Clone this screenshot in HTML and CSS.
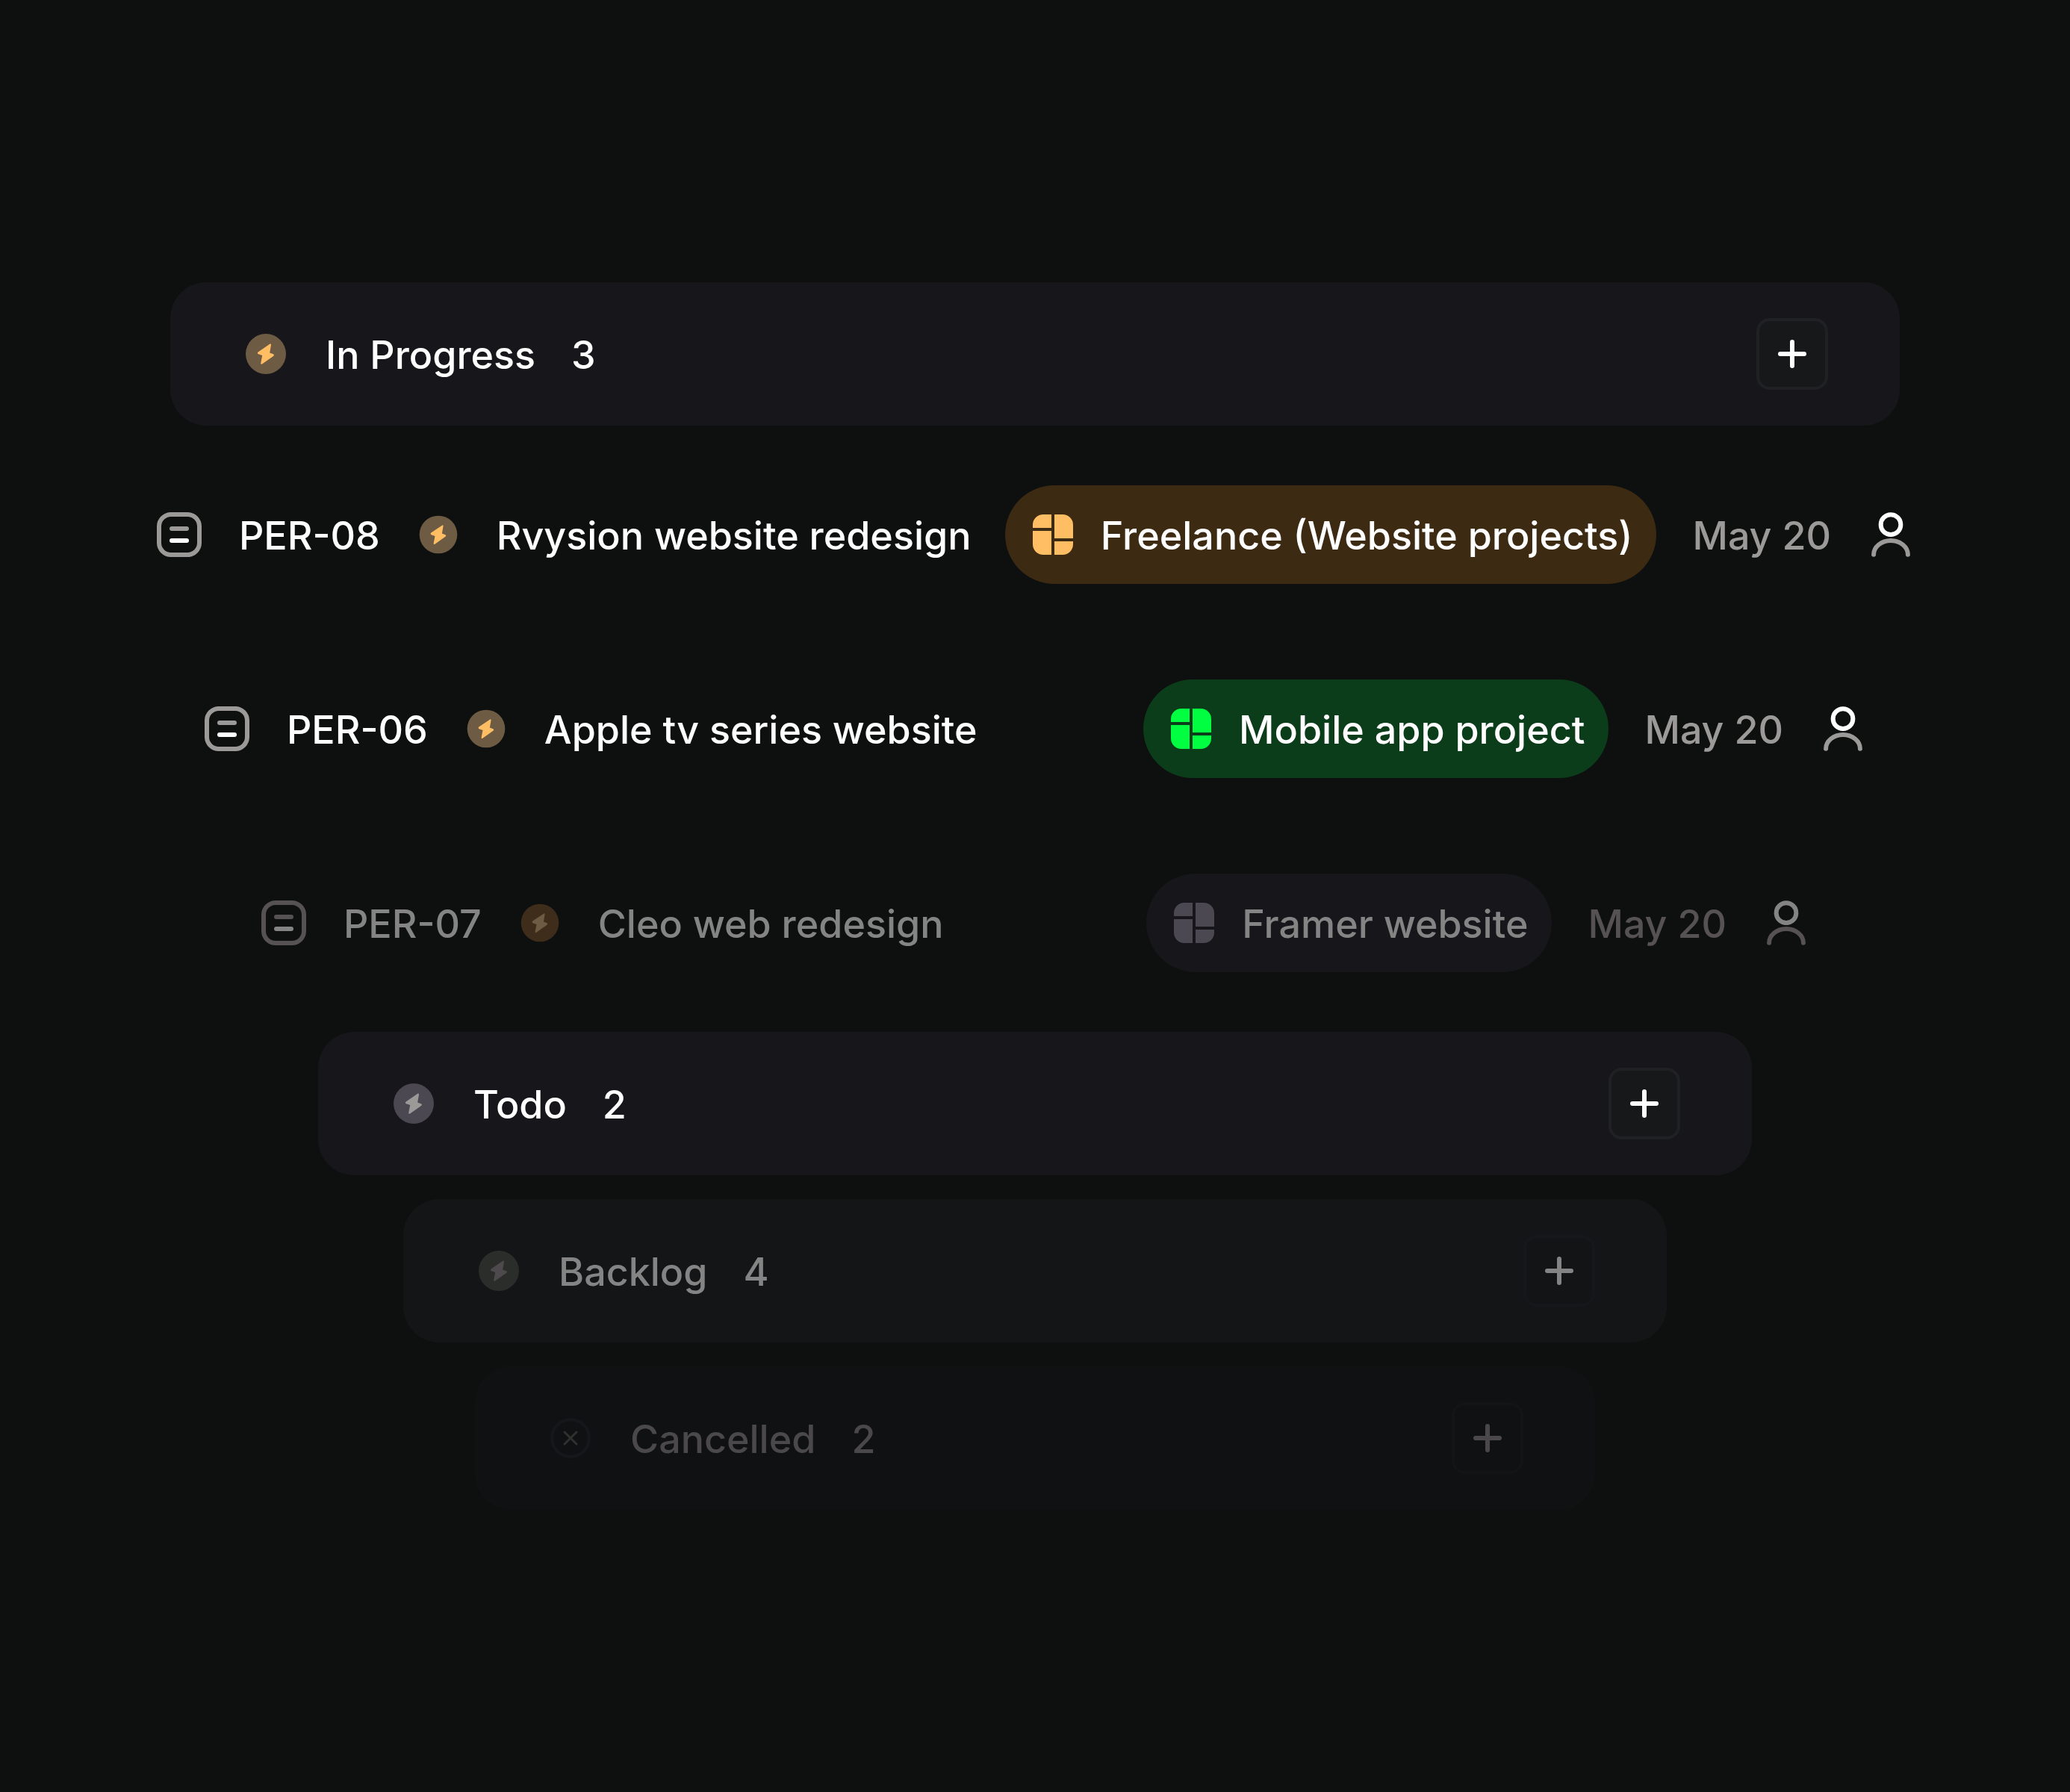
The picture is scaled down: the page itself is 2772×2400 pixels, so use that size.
FILE: index.html
```html
<!DOCTYPE html>
<html lang="en">
<head>
    <meta charset="UTF-8">
    <meta name="viewport" content="width=device-width, initial-scale=1.0">
    <title>Tasks</title>
    <link rel="stylesheet" href="styles.css">
</head>
<body>
    <!-- Icon sprite -->
    <svg class="sprite" aria-hidden="true">
        <symbol id="icon-bolt" viewBox="0 0 64 64">
            <circle cx="32" cy="32" r="27" fill="var(--disc)"/>
            <path fill="var(--bolt)" d="M37.6 18.6 21.6 29.4Q20 31.2 22 32.2L27.2 34 25.2 44.4Q25.2 46.4 27 45.6L42 35Q43.8 33.2 42 32.2L37.2 30.4 39 20Q39.2 17.8 37.6 18.6Z"/>
        </symbol>
        <symbol id="icon-cancel" viewBox="0 0 64 64">
            <circle cx="32" cy="32" r="25" fill="none" stroke="var(--disc)" stroke-width="4"/>
            <path d="M24 24 40 40M40 24 24 40" fill="none" stroke="var(--bolt)" stroke-width="3" stroke-linecap="round"/>
        </symbol>
        <symbol id="icon-task" viewBox="0 0 64 64">
            <rect x="5" y="5" width="54" height="54" rx="16" fill="none" stroke="var(--soft)" stroke-width="6"/>
            <path d="M22 24H42" stroke="var(--soft)" stroke-width="6" stroke-linecap="round"/>
            <path d="M22 40H42" stroke="var(--strong)" stroke-width="6" stroke-linecap="round"/>
        </symbol>
        <symbol id="icon-project" viewBox="0 0 64 64">
            <path fill="currentColor" d="M30 5V23H5V19A14 14 0 0 1 19 5ZM34 5H45A14 14 0 0 1 59 19V37H34ZM5 27H30V59H19A14 14 0 0 1 5 45ZM34 41H59V45A14 14 0 0 1 45 59H34Z"/>
        </symbol>
        <symbol id="icon-user" viewBox="0 0 24 24">
            <circle cx="12" cy="7" r="5" fill="none" stroke="var(--strong)" stroke-width="2.25"/>
            <path d="M20.59 22c0-3.87-3.85-7-8.59-7s-8.59 3.13-8.59 7" fill="none" stroke="var(--soft)" stroke-width="2.25" stroke-linecap="round"/>
        </symbol>
        <symbol id="icon-plus" viewBox="0 0 64 64">
            <path d="M16 32H48M32 16V48" fill="none" stroke="currentColor" stroke-width="6" stroke-linecap="round"/>
        </symbol>
    </svg>

    <main class="board">
        <section class="group">
            <header class="group-header header-progress">
                <svg class="icon bolt-orange" aria-hidden="true"><use href="#icon-bolt"/></svg>
                <h2>In Progress</h2>
                <span class="count">3</span>
                <button type="button" class="add" aria-label="Add task to In Progress"><svg class="icon"><use href="#icon-plus"/></svg></button>
            </header>

            <ul class="tasks">
                <li class="task task-first">
                    <svg class="icon" aria-hidden="true"><use href="#icon-task"/></svg>
                    <span class="task-id">PER-08</span>
                    <svg class="icon icon-small bolt-orange" aria-hidden="true"><use href="#icon-bolt"/></svg>
                    <span class="task-title">Rvysion website redesign</span>
                    <span class="project project-orange">
                        <svg class="icon" aria-hidden="true"><use href="#icon-project"/></svg>
                        <span class="project-name">Freelance (Website projects)</span>
                    </span>
                    <time class="date">May 20</time>
                    <svg class="icon" aria-hidden="true"><use href="#icon-user"/></svg>
                </li>
                <li class="task task-second">
                    <svg class="icon" aria-hidden="true"><use href="#icon-task"/></svg>
                    <span class="task-id">PER-06</span>
                    <svg class="icon icon-small bolt-orange" aria-hidden="true"><use href="#icon-bolt"/></svg>
                    <span class="task-title">Apple tv series website</span>
                    <span class="project project-green">
                        <svg class="icon" aria-hidden="true"><use href="#icon-project"/></svg>
                        <span class="project-name">Mobile app project</span>
                    </span>
                    <time class="date">May 20</time>
                    <svg class="icon" aria-hidden="true"><use href="#icon-user"/></svg>
                </li>
                <li class="task task-third">
                    <svg class="icon" aria-hidden="true"><use href="#icon-task"/></svg>
                    <span class="task-id">PER-07</span>
                    <svg class="icon icon-small bolt-brown" aria-hidden="true"><use href="#icon-bolt"/></svg>
                    <span class="task-title">Cleo web redesign</span>
                    <span class="project project-grey">
                        <svg class="icon" aria-hidden="true"><use href="#icon-project"/></svg>
                        <span class="project-name">Framer website</span>
                    </span>
                    <time class="date">May 20</time>
                    <svg class="icon" aria-hidden="true"><use href="#icon-user"/></svg>
                </li>
            </ul>
        </section>

        <section class="group">
            <header class="group-header header-todo">
                <svg class="icon bolt-grey" aria-hidden="true"><use href="#icon-bolt"/></svg>
                <h2>Todo</h2>
                <span class="count">2</span>
                <button type="button" class="add" aria-label="Add task to Todo"><svg class="icon"><use href="#icon-plus"/></svg></button>
            </header>
        </section>

        <section class="group">
            <header class="group-header header-backlog">
                <svg class="icon bolt-dim" aria-hidden="true"><use href="#icon-bolt"/></svg>
                <h2>Backlog</h2>
                <span class="count">4</span>
                <button type="button" class="add" aria-label="Add task to Backlog"><svg class="icon"><use href="#icon-plus"/></svg></button>
            </header>
        </section>

        <section class="group">
            <header class="group-header header-cancelled">
                <svg class="icon cancel-dim" aria-hidden="true"><use href="#icon-cancel"/></svg>
                <h2>Cancelled</h2>
                <span class="count">2</span>
                <button type="button" class="add" aria-label="Add task to Cancelled"><svg class="icon"><use href="#icon-plus"/></svg></button>
            </header>
        </section>
    </main>
</body>
</html>
```
FILE: styles.css
```css
* { box-sizing: border-box; }

body {
    margin: 0;
    background: #0e100f;
    color: #fff;
    font-family: Inter, "Liberation Sans", sans-serif;
    font-size: 52px;
    font-weight: 500;
    line-height: 72px;
    white-space: nowrap;
}

h2 { margin: 0; font-size: inherit; font-weight: inherit; }
h2, .count, .task-id, .task-title, .project-name, .date { padding-top: 4px; }

.sprite { position: absolute; width: 0; height: 0; }
.icon { display: block; flex: none; width: 64px; height: 64px; }
.icon-small { width: 60px; height: 60px; }

.board {
    display: flex;
    flex-direction: column;
    justify-content: center;
    gap: 32px;
    min-height: 100vh;
}

/* Group headers */
.group-header {
    display: flex;
    align-items: center;
    gap: 48px;
    padding: 48px 96px;
    border-radius: 48px;
    background: #17161b;
}
.header-progress { margin: 0 228px; }
.header-todo { margin: 0 426px; }
.header-backlog { margin: 0 540px; background: #141517; color: #848484; }
.header-cancelled { margin: 0 636px; background: #101113; color: #4b484b; }

.add {
    display: flex;
    align-items: center;
    justify-content: center;
    width: 96px;
    height: 96px;
    margin-left: auto;
    padding: 0;
    border: 4px solid #202123;
    border-radius: 18px;
    background: #17181a;
    color: inherit;
    cursor: pointer;
}
.header-backlog .add { border-color: #17161b; background: #131416; }
.header-cancelled .add { border-color: #131416; background: #101113; }

/* Tasks */
.tasks {
    display: flex;
    flex-direction: column;
    gap: 128px;
    margin: 0;
    padding: 80px 0 48px;
    list-style: none;
}
.task {
    --strong: #fff;
    --soft: #9b9a98;
    display: flex;
    align-items: center;
    gap: 48px;
}
.task-first { margin: 0 208px; }
.task-second { margin: 0 272px; }
.task-third { --strong: #848484; --soft: #565153; margin: 0 348px; color: #848484; }
.task-title { flex: 1; min-width: 0; }
.date { color: var(--soft); }

.project {
    display: flex;
    align-items: center;
    gap: 32px;
    height: 132px;
    padding: 0 32px;
    border-radius: 66px;
}
.project-name { color: #fff; }
.project-orange { background: #3d2a13; color: #ffbe63; }
.project-green { background: #0c3d1b; color: #01fe41; }
.project-grey { background: #17161b; color: #4b4852; }
.project-grey .project-name { color: #848484; }

/* Status colours */
.bolt-orange { --disc: #6d5b43; --bolt: #ffbe63; }
.bolt-brown { --disc: #3f2d1c; --bolt: #6d5b43; }
.bolt-grey { --disc: #4b4852; --bolt: #9b9a98; }
.bolt-dim { --disc: #2b2d2b; --bolt: #4d494c; }
.cancel-dim { --disc: #17161b; --bolt: #2f312f; }
```
